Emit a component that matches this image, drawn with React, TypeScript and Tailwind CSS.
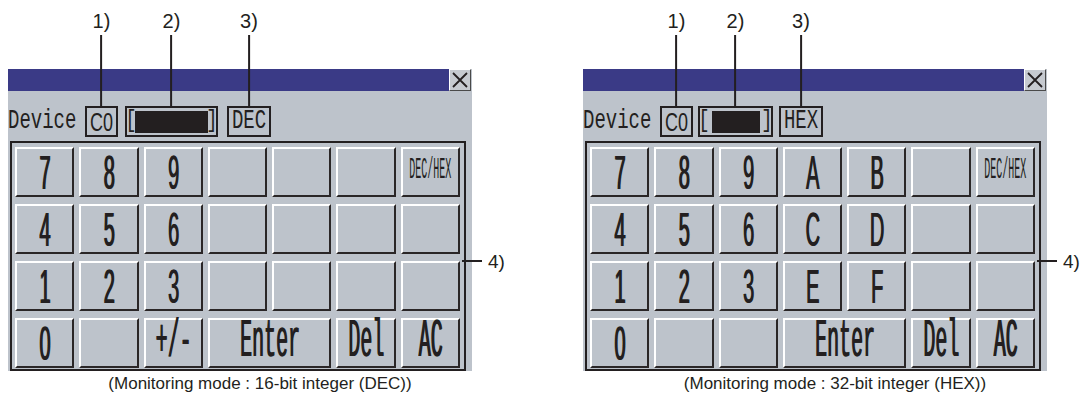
import React from "react";

type KeyDef = { label: string; wide?: boolean };

const keyBase =
  "flex items-center justify-center overflow-visible bg-[#bdc3cb] border-2 border-t-white border-l-white border-r-[#2a2627] border-b-[#2a2627]";

function Key({ k }: { k: KeyDef }) {
  const small = k.label === "DEC/HEX";
  const single = k.label.length === 1;
  const cls = small
    ? "inline-block whitespace-nowrap font-['Liberation_Mono',monospace] text-[10px] leading-none text-[#231f20] scale-y-[3]"
    : single
    ? "inline-block whitespace-nowrap font-['Liberation_Sans',Arial,sans-serif] text-[20px] leading-none text-[#231f20] scale-y-[2.45] [text-shadow:0.8px_0_0_#231f20]"
    : "inline-block whitespace-nowrap font-['Liberation_Mono',monospace] text-[20px] leading-none text-[#231f20] scale-y-[2.65] [text-shadow:0.8px_0_0_#231f20]";
  return (
    <div className={k.wide ? `col-span-2 ${keyBase}` : keyBase}>
      {k.label !== "" && <span className={cls}>{k.label}</span>}
    </div>
  );
}

function Callout({ n }: { n: string }) {
  return (
    <div className="absolute bottom-full left-1/2 -translate-x-1/2 flex flex-col items-center">
      <span className="font-['Liberation_Sans',Arial,sans-serif] text-[20px] leading-[20px] pb-[4px] text-[#231f20]">
        {n}
      </span>
      <div className="w-[2px] h-[73px] bg-[#231f20]" />
    </div>
  );
}

function Panel({
  mode,
  boxW,
  rectW,
  gaps,
  keys,
  caption,
}: {
  mode: string;
  boxW: string;
  rectW: string;
  gaps: [string, string, string];
  keys: KeyDef[];
  caption: string;
}) {
  return (
    <div className="flex flex-col w-[464px] shrink-0">
      {/* title bar */}
      <div className="flex h-[22px]">
        <div className="flex-1 bg-[#3a3a86]" />
        <div className="w-[22px] h-[22px] bg-[#c6cad0] border border-t-white border-l-white border-r-[#4a4a4a] border-b-[#4a4a4a] flex items-center justify-center">
          <svg width="18" height="18" viewBox="0 0 18 18">
            <path d="M2 2 L16 16 M16 2 L2 16" stroke="#231f20" strokeWidth="1.8" fill="none" />
          </svg>
        </div>
        <div className="w-[1px] bg-[#bdc3cb]" />
      </div>
      {/* body */}
      <div className="bg-[#bdc3cb] flex flex-col">
        <div className="h-[50px] pt-[15px] flex items-start">
          <div className="h-[31px] flex items-center">
            <span className="w-[69px] inline-block font-['Liberation_Mono',monospace] text-[19px] leading-none text-[#231f20] scale-y-[1.5]">
              Device
            </span>
            <div className={`relative ${gaps[0]} w-[33px] h-[31px] border-2 border-[#231f20] flex items-center justify-center`}>
              <span className="inline-block font-['Liberation_Sans',Arial,sans-serif] text-[18px] leading-none text-[#231f20] scale-y-[1.45]">
                C0
              </span>
              <Callout n="1)" />
            </div>
            <div className={`relative ${gaps[1]} ${boxW} h-[31px] border-2 border-[#231f20] flex items-center justify-between`}>
              <span className="w-[8px] flex justify-center font-['Liberation_Mono',monospace] text-[19px] leading-none text-[#231f20] scale-y-[1.3]">
                [
              </span>
              <div className={`${rectW} h-[22px] bg-[#231f20]`} />
              <span className="w-[8px] flex justify-center font-['Liberation_Mono',monospace] text-[19px] leading-none text-[#231f20] scale-y-[1.3]">
                ]
              </span>
              <Callout n="2)" />
            </div>
            <div className={`relative ${gaps[2]} w-[44px] h-[31px] border-2 border-[#231f20] flex items-center justify-center`}>
              <span className="inline-block font-['Liberation_Mono',monospace] text-[19px] leading-none text-[#231f20] scale-y-[1.5]">
                {mode}
              </span>
              <Callout n="3)" />
            </div>
          </div>
        </div>
        {/* keypad */}
        <div className="relative ml-[2px] mr-[6px] h-[230px] border-2 border-[#231f20] pt-[4px] pl-[3px] pr-[4px] pb-[1px]">
          <div className="grid grid-cols-7 grid-rows-[50px_50px_50px_50px] gap-x-[5px] gap-y-[7px]">
            {keys.map((k, i) => (
              <Key key={i} k={k} />
            ))}
          </div>
          <div className="absolute left-[calc(100%-2px)] top-[107px] h-[22px] flex items-center">
            <div className="w-[20px] h-[2px] bg-[#231f20]" />
            <span className="ml-[6px] font-['Liberation_Sans',Arial,sans-serif] text-[19px] leading-none text-[#231f20]">
              4)
            </span>
          </div>
        </div>
      </div>
      <div className="mt-[2px] pl-[40px] text-center font-['Liberation_Sans',Arial,sans-serif] text-[17px] leading-[22px] text-[#231f20] whitespace-nowrap">
        {caption}
      </div>
    </div>
  );
}

const L = (s: string): KeyDef => ({ label: s });

const leftKeys: KeyDef[] = [
  ...["7", "8", "9", "", "", "", "DEC/HEX"].map(L),
  ...["4", "5", "6", "", "", "", ""].map(L),
  ...["1", "2", "3", "", "", "", ""].map(L),
  L("0"),
  L(""),
  L("+/-"),
  { label: "Enter", wide: true },
  L("Del"),
  L("AC"),
];

const rightKeys: KeyDef[] = [
  ...["7", "8", "9", "A", "B", "", "DEC/HEX"].map(L),
  ...["4", "5", "6", "C", "D", "", ""].map(L),
  ...["1", "2", "3", "E", "F", "", ""].map(L),
  L("0"),
  L(""),
  L(""),
  { label: "Enter", wide: true },
  L("Del"),
  L("AC"),
];

export default function App() {
  return (
    <div className="w-[1089px] h-[407px] bg-white overflow-hidden flex pl-[8px] pt-[69px] gap-[111px]">
      <Panel
        mode="DEC"
        boxW="w-[93px]"
        rectW="w-[73px]"
        gaps={["ml-[8px]", "ml-[7px]", "ml-[9px]"]}
        keys={leftKeys}
        caption="(Monitoring mode : 16-bit integer (DEC))"
      />
      <Panel
        mode="HEX"
        boxW="w-[75px]"
        rectW="w-[48px]"
        gaps={["ml-[8px]", "ml-[5px]", "ml-[6px]"]}
        keys={rightKeys}
        caption="(Monitoring mode : 32-bit integer (HEX))"
      />
    </div>
  );
}
